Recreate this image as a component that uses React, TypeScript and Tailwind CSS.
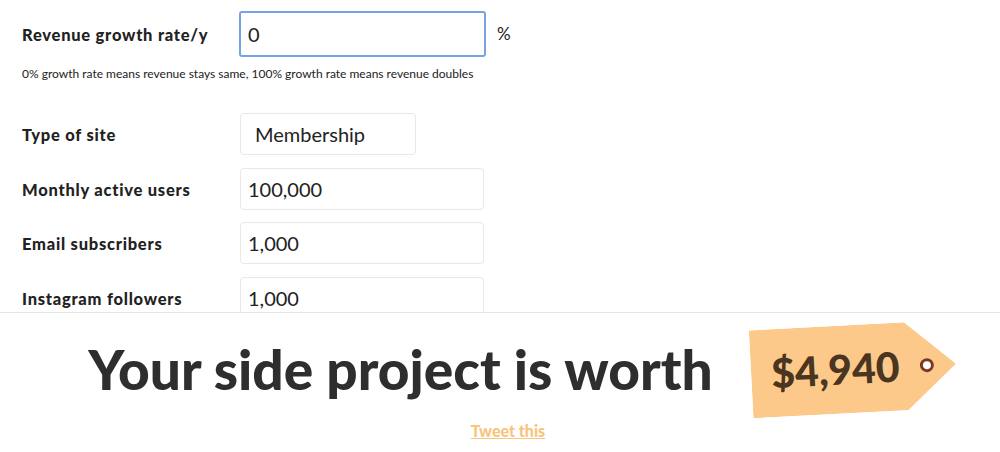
import React from "react";

const font = { fontFamily: '"Lato", "Noto Sans", sans-serif' };

function Row({ label, value, width, pad }: { label: string; value: string; width: string; pad: string }) {
  return (
    <div className="flex items-center h-[42px]">
      <div className="w-[218px] pt-[3px] text-[16.5px] font-black tracking-[0.75px] text-[#222]">{label}</div>
      <div className={`${width} ${pad} h-[42px] border border-[#e8e8e8] rounded-[4px] flex items-center text-[20px] text-[#222]`}>
        {value}
      </div>
    </div>
  );
}

export default function App() {
  return (
    <div className="w-[1000px] h-[452px] flex flex-col bg-white overflow-hidden" style={font}>
      <div className="flex-1 overflow-hidden pl-[22px] pt-[11px]">
        <div className="flex items-center h-[46px]">
          <div className="w-[217px] pt-[2px] text-[16.5px] font-black tracking-[0.75px] text-[#222]">Revenue growth rate/y</div>
          <div className="w-[247px] h-[46px] border-2 border-[#77a2e6] rounded-[3px] flex items-center px-[7px] text-[20px] text-[#222]">0</div>
          <div className="ml-[11px] text-[17px] text-[#222]">%</div>
        </div>
        <div className="mt-[10px] text-[12px] leading-[14px] text-[#222]">
          0% growth rate means revenue stays same, 100% growth rate means revenue doubles
        </div>
        <div className="mt-[32px] flex flex-col gap-[12.5px]">
          <Row label="Type of site" value="Membership" width="w-[176px]" pad="px-[14px]" />
          <Row label="Monthly active users" value="100,000" width="w-[244px]" pad="px-[7px]" />
          <Row label="Email subscribers" value="1,000" width="w-[244px]" pad="px-[7px]" />
          <Row label="Instagram followers" value="1,000" width="w-[244px]" pad="px-[7px]" />
        </div>
      </div>
      <div className="h-[140px] border-t border-[#e6e6e6] flex flex-col items-center">
        <div className="flex items-center justify-center mt-[12px] ml-[44px]">
          <div className="text-[55px] font-black text-[#2e2e2e] leading-none">Your side project is worth</div>
          <div className="ml-[38px] relative w-[205px] h-[88px] -rotate-3">
            <svg className="absolute inset-0" width="205" height="88" viewBox="0 0 205 88">
              <polygon points="0,0 155,0 205,44 155,88 0,88" fill="#fdc98b" />
              <circle cx="176" cy="44" r="5.5" fill="#fff" stroke="#7a3a22" strokeWidth="3" />
            </svg>
            <div className="absolute left-[20px] top-0 h-[86px] flex items-center text-[41px] font-black text-[#4a3520] leading-none">
              $4,940
            </div>
          </div>
        </div>
        <a className="mt-[6px] ml-[16px] text-[16px] font-black text-[#f8c47e] underline">Tweet this</a>
      </div>
    </div>
  );
}
